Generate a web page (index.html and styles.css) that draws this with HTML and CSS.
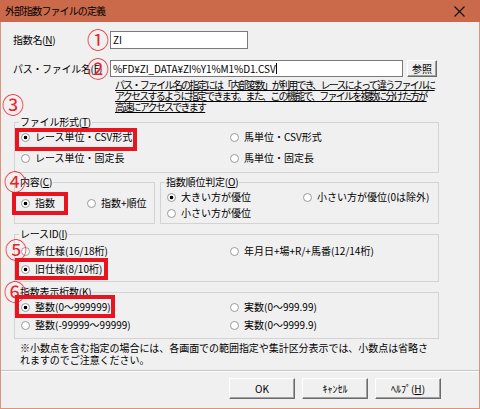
FILE: index.html
```html
<!DOCTYPE html>
<html lang="ja">
<head>
<meta charset="utf-8">
<title>外部指数ファイルの定義</title>
<link rel="stylesheet" href="styles.css">
</head>
<body>
<div class="window">
  <div class="titlebar">
    <span class="title">外部指数ファイルの定義</span>
    <svg class="close" width="11" height="11" viewBox="0 0 11 11"><path d="M0.5 0.5L10.5 10.5M10.5 0.5L0.5 10.5" stroke="#111" stroke-width="1.1" fill="none"/></svg>
  </div>
  <div class="content">
    <div class="field-row row-name">
      <span class="field-label">指数名(<u>N</u>)</span>
      <div class="textbox tb-name">ZI</div>
    </div>
    <div class="field-row row-path">
      <span class="field-label">パス・ファイル名(<u>F</u>)</span>
      <div class="textbox tb-path">%FD¥ZI_DATA¥ZI%Y1%M1%D1.CSV<span class="caret"></span></div>
      <div class="btn btn-browse">参照</div>
    </div>
    <p class="path-note">パス・ファイル名の指定には「内部変数」が利用でき、レースによって違うファイルに<br>アクセスするように指定できます。また、この機能で、ファイルを複数に分けた方が<br>高速にアクセスできます</p>

    <fieldset class="group g-format">
      <legend>ファイル形式(<u>T</u>)</legend>
      <div class="opts opts-format">
        <span class="opt"><span class="radio checked"></span>レース単位・CSV形式</span>
        <span class="opt"><span class="radio"></span>馬単位・CSV形式</span>
        <span class="opt"><span class="radio"></span>レース単位・固定長</span>
        <span class="opt"><span class="radio"></span>馬単位・固定長</span>
      </div>
    </fieldset>

    <div class="group-pair">
      <fieldset class="group g-content">
        <legend>内容(<u>C</u>)</legend>
        <div class="opts opts-content">
          <span class="opt"><span class="radio checked"></span>指数</span>
          <span class="opt"><span class="radio"></span>指数+順位</span>
        </div>
      </fieldset>
      <fieldset class="group g-rank">
        <legend>指数順位判定(<u>O</u>)</legend>
        <div class="opts opts-rank">
          <span class="opt"><span class="radio checked"></span>大きい方が優位</span>
          <span class="opt"><span class="radio"></span>小さい方が優位(0は除外)</span>
          <span class="opt"><span class="radio"></span>小さい方が優位</span>
        </div>
      </fieldset>
    </div>

    <fieldset class="group g-race">
      <legend>レースID(<u>I</u>)</legend>
      <div class="opts opts-race">
        <span class="opt"><span class="radio"></span>新仕様(16/18桁)</span>
        <span class="opt"><span class="radio"></span>年月日+場+R/+馬番(12/14桁)</span>
        <span class="opt"><span class="radio checked"></span>旧仕様(8/10桁)</span>
      </div>
    </fieldset>

    <fieldset class="group g-digits">
      <legend>指数表示桁数(<u>K</u>)</legend>
      <div class="opts opts-digits">
        <span class="opt"><span class="radio checked"></span>整数(0〜999999)</span>
        <span class="opt"><span class="radio"></span>実数(0〜999.99)</span>
        <span class="opt"><span class="radio"></span>整数(-99999〜99999)</span>
        <span class="opt"><span class="radio"></span>実数(0〜9999.9)</span>
      </div>
    </fieldset>

    <p class="note">※小数点を含む指定の場合には、各画面での範囲指定や集計区分表示では、小数点は省略さ<br>れますのでご注意ください。</p>

    <div class="separator"></div>

    <div class="buttons">
      <div class="btn btn-main">OK</div>
      <div class="btn btn-main">ｷｬﾝｾﾙ</div>
      <div class="btn btn-main">ﾍﾙﾌﾟ(<u>H</u>)</div>
    </div>
  </div>

  <span class="mark m1">①</span>
  <span class="mark m2">②</span>
  <span class="mark m3">③</span>
  <span class="mark m4">④</span>
  <span class="mark m5">⑤</span>
  <span class="mark m6">⑥</span>

  <span class="hl hl-format"></span>
  <span class="hl hl-content"></span>
  <span class="hl hl-race"></span>
  <span class="hl hl-digits"></span>
</div>
</body>
</html>
```

FILE: styles.css
```css
* { box-sizing: border-box; }
html, body { margin: 0; padding: 0; }
body {
  width: 480px;
  height: 409px;
  overflow: hidden;
  background: #ffffff;
  font-family: "Noto Sans CJK JP", "Noto Sans", sans-serif;
  font-size: 10px;
  color: #000;
}
u { text-decoration: underline; }

.window {
  position: relative;
  width: 480px;
  height: 409px;
}

.titlebar {
  height: 22px;
  background: #ca6a4b;
  display: flex;
  align-items: center;
  justify-content: space-between;
  padding: 0 15px 0 5px;
}
.title {
  font-size: 10px;
  line-height: 12px;
  letter-spacing: -0.9px;
}
.close { display: block; }

.content {
  height: 387px;
  background: #f0f0f0;
  border: 1px solid #d9947b;
  border-top: 0;
  padding: 9px 0 0 12px;
}

.field-row {
  display: flex;
  align-items: center;
}
.row-name { height: 18px; }
.row-path { height: 17px; margin-top: 11px; }
.field-label {
  width: 97px;
  line-height: 12px;
  white-space: nowrap;
  letter-spacing: -0.3px;
}
.textbox {
  height: 100%;
  background: #fff;
  border: 1px solid #7a7a7a;
  padding: 0 2px;
  line-height: 15px;
  white-space: nowrap;
}
.tb-name { width: 138px; }
.tb-path { width: 293px; letter-spacing: -0.1px; }
.caret {
  display: inline-block;
  width: 1px;
  height: 11px;
  background: #000;
  vertical-align: -1px;
}

.btn {
  display: flex;
  align-items: center;
  justify-content: center;
  background: #f0f0f0;
  border: 1px solid;
  border-color: #ffffff #6b6b6b #6b6b6b #ffffff;
  box-shadow: inset -1px -1px 0 #a0a0a0;
  line-height: 12px;
  white-space: nowrap;
}
.btn-browse {
  width: 30px;
  height: 17px;
  margin-left: 4px;
}

.path-note {
  margin: 2px 0 0 102px;
  font-size: 10px;
  line-height: 11px;
  letter-spacing: -1.75px;
  text-decoration: underline;
  white-space: nowrap;
}

.group {
  margin: 0 0 0 1px;
  padding: 0;
  border: 1px solid #d3d3d3;
  min-width: 0;
}
.group legend {
  margin-left: 4px;
  padding: 0 1px;
  line-height: 12px;
  letter-spacing: -0.2px;
}

.opts {
  display: grid;
  padding-left: 6px;
}
.opt {
  display: flex;
  align-items: center;
  white-space: nowrap;
  line-height: 12px;
}
.radio {
  flex: none;
  width: 9px;
  height: 9px;
  margin-right: 5px;
  border: 1px solid #9a9a9a;
  border-radius: 50%;
  background: #fff;
}
.radio.checked {
  background: radial-gradient(circle, #000 0 1.6px, #fff 2.1px);
}

.g-format { width: 425px; height: 57px; margin-top: 4px; }
.opts-format {
  grid-template-columns: 209px auto;
  grid-auto-rows: 18px;
  row-gap: 3px;
}

.group-pair {
  display: flex;
  gap: 5px;
  margin-top: 3px;
  margin-left: 1px;
  height: 48px;
}
.group-pair .group { margin-left: 0; height: 48px; }
.g-content { width: 141px; }
.g-rank { width: 279px; }
.opts-content {
  grid-template-columns: 66px auto;
  grid-auto-rows: 18px;
  padding-top: 6px;
}
.opts-rank {
  grid-template-columns: 136px auto;
  grid-auto-rows: 16px;
  padding-top: 1px;
}

.g-race { width: 425px; height: 54px; margin-top: 4px; }
.opts-race {
  grid-template-columns: 209px auto;
  grid-auto-rows: 18px;
  padding-top: 2px;
}

.g-digits { width: 425px; height: 53px; margin-top: 4px; }
.opts-digits {
  grid-template-columns: 209px auto;
  grid-auto-rows: 18px;
}

.note {
  margin: 3px 0 0 7px;
  line-height: 12px;
  white-space: nowrap;
  letter-spacing: -0.05px;
}

.separator {
  margin: 4px 0 0 -12px;
  width: 478px;
  height: 2px;
  border-top: 1px solid #c4c4c4;
  border-bottom: 1px solid #ffffff;
}

.buttons {
  display: flex;
  gap: 7px;
  margin: 6px 0 0 216px;
}
.btn-main {
  width: 66px;
  height: 21px;
}

/* annotation overlays */
.mark {
  position: absolute;
  width: 22px;
  height: 22px;
  font-size: 22px;
  line-height: 22px;
  color: #e8232b;
  text-align: center;
}
.m1 { left: 87px; top: 27px; }
.m2 { left: 87px; top: 56px; }
.m3 { left: 2px; top: 92px; }
.m4 { left: 4px; top: 169px; }
.m5 { left: 5px; top: 237px; }
.m6 { left: 4px; top: 279px; }

.hl {
  position: absolute;
  border: 4px solid #e8141e;
}
.hl-format { left: 15px; top: 128px; width: 122px; height: 23px; }
.hl-content { left: 12px; top: 192px; width: 56px; height: 23px; }
.hl-race { left: 15px; top: 258px; width: 93px; height: 22px; }
.hl-digits { left: 15px; top: 295px; width: 100px; height: 23px; }
```
